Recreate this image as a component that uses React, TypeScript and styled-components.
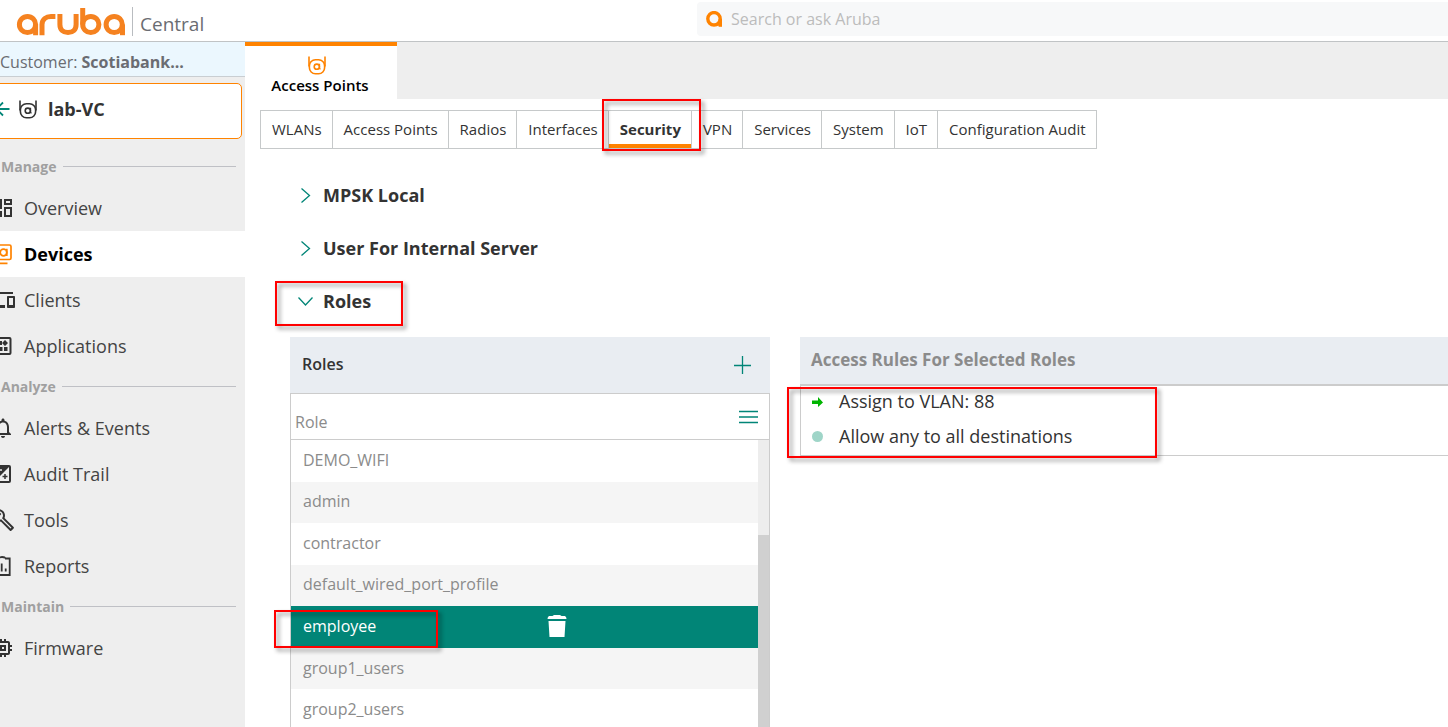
import React from "react";
import styled, { createGlobalStyle, css } from "styled-components";
import {
  MdOutlineDashboard,
  MdOutlineDevices,
  MdNotificationsNone,
  MdOutlineBuild,
  MdOutlineMemory,
} from "react-icons/md";

const orange = "#ff8300";
const teal = "#018577";
const line = "#c6c9ca";

const GlobalStyle = createGlobalStyle`
  * { box-sizing: border-box; }
  body {
    margin: 0;
    background: #fff;
    color: #333;
    font-family: "Open Sans", "Noto Sans", sans-serif;
    font-size: 16px;
  }
  button, input { font: inherit; color: inherit; }
  button { background: none; border: 0; padding: 0; cursor: pointer; }
  h2, ul { margin: 0; padding: 0; }
  ul { list-style: none; }
`;

const Page = styled.div`
  display: flex;
  flex-direction: column;
  height: 100vh;
  overflow: hidden;
`;

const Header = styled.header`
  display: flex;
  flex: none;
  height: 42px;
  border-bottom: 1px solid #c0c3c5;
`;

const Brand = styled.a`
  display: flex;
  flex: 1;
  align-items: center;
  gap: 6px;
  padding: 2px 0 0 16px;
  color: #6a6c72;
  font-size: 19px;
  text-decoration: none;
`;

const BrandName = styled.span`
  height: 29px;
  padding-left: 7px;
  border-left: 1px solid #b9bcc0;
  line-height: 34px;
`;

const Search = styled.label`
  display: flex;
  align-items: center;
  gap: 9px;
  width: calc(52% - 2px);
  height: 34px;
  margin: 2px 0;
  padding-left: 9px;
  border-radius: 4px 0 0 4px;
  background: #f7f8f9;
`;

const SearchInput = styled.input`
  flex: 1;
  padding: 0;
  border: 0;
  outline: 0;
  background: transparent;
  &::placeholder { color: #bcbcbc; opacity: 1; }
`;

const Body = styled.div`
  display: flex;
  flex: 1;
  min-height: 0;
`;

const Sidebar = styled.aside`
  flex: none;
  width: 245px;
  overflow: hidden;
  background: #eee;
`;

const Customer = styled.div`
  height: 35px;
  border-bottom: 1px solid #c9ced2;
  background: #ebf7fe;
  color: #6a6c72;
  line-height: 40px;
`;

const Context = styled.div`
  display: flex;
  align-items: center;
  height: 56px;
  margin: 6px 3px 10px -6px;
  padding-bottom: 4px;
  border: 1px solid ${orange};
  border-radius: 5px;
  background: #fff;
  font-size: 18px;
  font-weight: 700;
`;

const BackButton = styled.button`
  display: flex;
  margin-right: 8px;
`;

const ContextName = styled.span`
  margin-left: 11px;
`;

const SectionTitle = styled.h2`
  display: flex;
  align-items: center;
  gap: 6px;
  height: 36px;
  padding: 0 9px 1px 1px;
  color: #a0a0a0;
  font-size: 14px;
  font-weight: 700;
  &::after {
    content: "";
    flex: 1;
    height: 1px;
    background: #bfc0c5;
  }
`;

const NavLink = styled.a<{ $active?: boolean }>`
  display: flex;
  align-items: center;
  gap: 9px;
  height: 46px;
  margin-left: -9px;
  padding-bottom: 1px;
  background: ${(p) => (p.$active ? "#fff" : "transparent")};
  color: ${(p) => (p.$active ? "#000" : "#444")};
  font-size: 18px;
  font-weight: ${(p) => (p.$active ? 700 : 400)};
  text-decoration: none;
  svg { flex: none; color: ${(p) => (p.$active ? orange : "#333")}; }
`;

const Main = styled.main`
  flex: 1;
  min-width: 0;
`;

const DeviceBar = styled.div`
  display: flex;
  height: 57px;
  background: #eee;
`;

const DeviceTab = styled.button`
  display: flex;
  flex-direction: column;
  align-items: center;
  justify-content: flex-end;
  width: 152px;
  padding: 0 2px 4px 0;
  border-top: 4px solid ${orange};
  background: #fff;
  color: #000;
  font-size: 15px;
  font-weight: 600;
  line-height: 20px;
  svg { margin-right: 6px; }
`;

const Tabs = styled.nav`
  display: flex;
  width: max-content;
  margin: 11px 15px 20px;
  border: 1px solid ${line};
`;

const Tab = styled.button<{ $active?: boolean }>`
  position: relative;
  height: 37px;
  padding: 0 10px 1px 11px;
  font-size: 15px;
  & + & { border-left: 1px solid ${line}; }
  ${(p) =>
    p.$active &&
    css`
      font-weight: 700;
      box-shadow: inset 0 -4px ${orange};
    `}
`;

const Highlight = styled.span<{ $inset: string }>`
  position: absolute;
  inset: ${(p) => p.$inset};
  z-index: 1;
  border: 2px solid #f00;
  filter: drop-shadow(3px 3px 2px rgba(0, 0, 0, 0.45));
  pointer-events: none;
`;

const AccordionButton = styled.button`
  position: relative;
  display: flex;
  align-items: center;
  gap: 8px;
  height: 53px;
  margin-left: 52px;
  padding-bottom: 2px;
  font-size: 18px;
  font-weight: 700;
`;

const Panels = styled.div`
  display: flex;
  gap: 30px;
  margin: 9px 0 0 45px;
  align-items: flex-start;
`;

const RolesPanel = styled.section`
  flex: none;
  width: 480px;
`;

const PanelHeader = styled.header`
  display: flex;
  align-items: center;
  justify-content: space-between;
  height: 56px;
  padding: 0 18px 2px 12px;
  background: #e9edf2;
`;

const PanelTitle = styled.h2`
  font-size: 16px;
  font-weight: 600;
`;

const Grid = styled.div`
  border: 1px solid #ccc;
`;

const ColumnHeader = styled.div`
  display: flex;
  align-items: center;
  justify-content: space-between;
  height: 46px;
  padding: 0 11px 0 4px;
  border-bottom: 1px solid #ccc;
  color: #8b8b8b;
`;

const ColumnName = styled.span`
  padding-top: 10px;
`;

const GridBody = styled.div`
  display: flex;
`;

const RoleList = styled.ul`
  display: grid;
  flex: 1;
  grid-auto-rows: 1fr;
  height: 291px;
`;

const RoleRow = styled.li<{ $selected?: boolean }>`
  position: relative;
  display: grid;
  grid-template-columns: 244px 1fr;
  align-items: center;
  padding: 0 0 2px 12px;
  background: #fff;
  color: #8b8b8b;
  &:nth-child(even) { background: #f5f5f5; }
  ${(p) =>
    p.$selected &&
    css`
      && { background: ${teal}; color: #fff; }
    `}
`;

const RoleName = styled.button`
  justify-self: start;
`;

const IconButton = styled.button`
  display: flex;
  justify-self: start;
`;

const Scrollbar = styled.div`
  width: 11px;
  padding-top: 95px;
  background: #ededed;
`;

const ScrollThumb = styled.div`
  height: 100%;
  background: #d0d0d0;
`;

const RulesPanel = styled.section`
  position: relative;
  flex: 1;
`;

const RulesHeader = styled(PanelHeader)`
  height: 49px;
  padding: 0 11px 2px;
  border-bottom: 2px solid #ccc;
  color: #8b8b8b;
`;

const RulesTitle = styled(PanelTitle)`
  font-size: 17px;
  font-weight: 700;
`;

const Rules = styled.ul`
  height: 70px;
  border: 1px solid #ccc;
  border-width: 0 0 1px 1px;
`;

const Rule = styled.li`
  display: flex;
  align-items: center;
  gap: 15px;
  height: 35px;
  padding: 0 0 5px 11px;
  font-size: 18px;
`;

const Logo = () => (
  <svg width="110" height="30" viewBox="16 7 110 30" fill="none" stroke="#f58220" strokeWidth="5" role="img" aria-label="aruba">
    <circle cx="27.5" cy="24.5" r="8.1" />
    <path d="M35.6 24.500V35.200M42 35.200V24.600C42 19.400 46 16.400 51 16.400H55.400M59.900 14V24.600C59.900 29.800 63 32.600 68 32.600S76.100 29.800 76.100 24.600V14M82.700 8V24.600" />
    <circle cx="90.800" cy="24.500" r="8.100" />
    <circle cx="114.200" cy="24.500" r="8.100" />
    <path d="M122.500 24.500V35.200" />
  </svg>
);

const SearchMark = () => (
  <svg width="16" height="16" viewBox="0 0 16 16" fill="none" stroke={orange} strokeWidth="3.400" aria-hidden="true">
    <circle cx="8" cy="7.800" r="6.200" />
    <path d="M14.300 8V15.800" />
    <path d="M11 13H15" />
  </svg>
);

const ApIcon = ({ color }: { color: string }) => (
  <svg width="18" height="19" viewBox="0 0 18 19" fill="none" stroke={color} strokeWidth="1.600" aria-hidden="true">
    <path d="M1 0.500V10.500M17 0.500V10.500" />
    <rect x="1.400" y="3.700" width="15.200" height="14" rx="6" />
    <circle cx="8.800" cy="10.700" r="2.600" />
    <path d="M11.500 7.800V12.500L12.500 13.300" strokeWidth="1.300" />
  </svg>
);

const DevicesIcon = () => (
  <svg width="24" height="24" viewBox="0 0 24 24" fill="none" stroke="currentColor" strokeWidth="1.700" aria-hidden="true">
    <rect x="3.500" y="3" width="16.500" height="14.500" rx="1.500" />
    <circle cx="12.500" cy="10.500" r="3.300" />
    <path d="M15.800 6.800V14M6 21.300H16.500" />
  </svg>
);

const ApplicationsIcon = () => (
  <svg width="24" height="24" viewBox="0 0 24 24" fill="currentColor" aria-hidden="true">
    <rect x="3" y="4" width="16.500" height="16" rx="1" fill="none" stroke="currentColor" strokeWidth="2" />
    <path d="M7 7H11V11H7ZM7 13H11.500V17H7ZM13 13H16.500V17H13ZM14 6L17 9L14 12L11 9Z" />
  </svg>
);

const AuditIcon = () => (
  <svg width="24" height="24" viewBox="0 0 24 24" fill="currentColor" aria-hidden="true">
    <rect x="3" y="4" width="16" height="16" rx="1" fill="none" stroke="currentColor" strokeWidth="2" />
    <path d="M3 4H19L3 20Z" />
    <path d="M14 12V17M11.500 14.500H16.500" stroke="currentColor" strokeWidth="1.500" />
    <path d="M6 8H11" stroke="#eee" strokeWidth="1.500" />
  </svg>
);

const ReportsIcon = () => (
  <svg width="24" height="24" viewBox="0 0 24 24" fill="none" stroke="currentColor" strokeWidth="1.800" aria-hidden="true">
    <path d="M8 4.500H3V21H18.700V4.500H14M8 4.500C8 2.500 14 2.500 14 4.500M7 17.500V13M10.700 17.500V9.500M14.700 17.500V14.500" />
  </svg>
);

const BackArrow = () => (
  <svg width="16" height="16" viewBox="0 0 16 16" fill="none" stroke={teal} strokeWidth="1.800" aria-hidden="true">
    <path d="M1.500 8H14.500M8 1.500L1.500 8L8 14.500" />
  </svg>
);

const Chevron = ({ open }: { open?: boolean }) => (
  <svg width="18" height="18" viewBox="0 0 18 18" fill="none" stroke={teal} strokeWidth="1.300" aria-hidden="true">
    <path d={open ? "M1.500 5.500L8.500 13L15.500 5.500" : "M4.500 2.500L12.500 9.500L4.500 16.500"} />
  </svg>
);

const PlusIcon = () => (
  <svg width="18" height="20" viewBox="0 0 18 20" stroke={teal} strokeWidth="1.300" aria-hidden="true">
    <path d="M0 11.500H17M8.500 2V20" />
  </svg>
);

const MenuIcon = () => (
  <svg width="19" height="15" viewBox="0 0 19 15" stroke={teal} strokeWidth="1.300" aria-hidden="true">
    <path d="M0 2.500H19M0 8H19M0 13.500H19" />
  </svg>
);

const TrashIcon = () => (
  <svg width="20" height="24" viewBox="0 0 20 24" fill="#fff" aria-hidden="true">
    <path d="M5.500 2L7 1H13L14.500 2H18Q19.500 3 19.500 5H0.500Q0.500 3 2 2ZM1.500 7H18.500L17.500 23H2.500Z" />
  </svg>
);

const ArrowMark = () => (
  <svg width="12" height="12" viewBox="0 0 12 12" fill="#00b400" aria-hidden="true">
    <path d="M0 5.500H6V2L11 7.500L6 12V9H0Z" />
  </svg>
);

const DotMark = () => (
  <svg width="12" height="12" viewBox="0 0 12 12" fill="#9fd5c8" aria-hidden="true">
    <circle cx="5.500" cy="6.500" r="5.500" />
  </svg>
);

const sections = [
  {
    title: "Manage",
    items: [
      { label: "Overview", icon: <MdOutlineDashboard size={24} /> },
      { label: "Devices", icon: <DevicesIcon />, active: true },
      { label: "Clients", icon: <MdOutlineDevices size={24} /> },
      { label: "Applications", icon: <ApplicationsIcon /> },
    ],
  },
  {
    title: "Analyze",
    items: [
      { label: "Alerts & Events", icon: <MdNotificationsNone size={24} /> },
      { label: "Audit Trail", icon: <AuditIcon /> },
      { label: "Tools", icon: <MdOutlineBuild size={24} /> },
      { label: "Reports", icon: <ReportsIcon /> },
    ],
  },
  { title: "Maintain", items: [{ label: "Firmware", icon: <MdOutlineMemory size={24} /> }] },
];

const tabs = ["WLANs", "Access Points", "Radios", "Interfaces", "Security", "VPN", "Services", "System", "IoT", "Configuration Audit"];

const roles = ["DEMO_WIFI", "admin", "contractor", "default_wired_port_profile", "employee", "group1_users", "group2_users"];

export default function App() {
  return (
    <Page>
      <GlobalStyle />
      <Header>
        <Brand href="#">
          <Logo />
          <BrandName>Central</BrandName>
        </Brand>
        <Search>
          <SearchMark />
          <SearchInput type="search" placeholder="Search or ask Aruba" aria-label="Search or ask Aruba" />
        </Search>
      </Header>
      <Body>
        <Sidebar>
          <Customer>
            Customer: <b>Scotiabank...</b>
          </Customer>
          <Context>
            <BackButton aria-label="Back">
              <BackArrow />
            </BackButton>
            <ApIcon color="#333" />
            <ContextName>lab-VC</ContextName>
          </Context>
          {sections.map((section) => (
            <nav key={section.title} aria-label={section.title}>
              <SectionTitle>{section.title}</SectionTitle>
              {section.items.map((item) => (
                <NavLink key={item.label} href="#" $active={"active" in item}>
                  {item.icon}
                  {item.label}
                </NavLink>
              ))}
            </nav>
          ))}
        </Sidebar>
        <Main>
          <DeviceBar>
            <DeviceTab>
              <ApIcon color={orange} />
              Access Points
            </DeviceTab>
          </DeviceBar>
          <Tabs>
            {tabs.map((tab) => (
              <Tab key={tab} $active={tab === "Security"}>
                {tab}
                {tab === "Security" && <Highlight $inset="-12px -10px -3px -7px" />}
              </Tab>
            ))}
          </Tabs>
          <AccordionButton>
            <Chevron />
            MPSK Local
          </AccordionButton>
          <AccordionButton>
            <Chevron />
            User For Internal Server
          </AccordionButton>
          <AccordionButton aria-expanded="true">
            <Chevron open />
            Roles
            <Highlight $inset="6px -32px 2px -22px" />
          </AccordionButton>
          <Panels>
            <RolesPanel>
              <PanelHeader>
                <PanelTitle>Roles</PanelTitle>
                <IconButton aria-label="Add role">
                  <PlusIcon />
                </IconButton>
              </PanelHeader>
              <Grid>
                <ColumnHeader>
                  <ColumnName>Role</ColumnName>
                  <IconButton aria-label="Columns">
                    <MenuIcon />
                  </IconButton>
                </ColumnHeader>
                <GridBody>
                  <RoleList>
                    {roles.map((role) => {
                      const selected = role === "employee";
                      return (
                        <RoleRow key={role} $selected={selected}>
                          <RoleName>{role}</RoleName>
                          {selected && (
                            <>
                              <IconButton aria-label="Delete role">
                                <TrashIcon />
                              </IconButton>
                              <Highlight $inset="4px 320px 0 -17px" />
                            </>
                          )}
                        </RoleRow>
                      );
                    })}
                  </RoleList>
                  <Scrollbar>
                    <ScrollThumb />
                  </Scrollbar>
                </GridBody>
              </Grid>
            </RolesPanel>
            <RulesPanel>
              <RulesHeader>
                <RulesTitle>Access Rules For Selected Roles</RulesTitle>
              </RulesHeader>
              <Rules>
                <Rule>
                  <ArrowMark />
                  Assign to VLAN: 88
                </Rule>
                <Rule>
                  <DotMark />
                  Allow any to all destinations
                </Rule>
              </Rules>
              <Highlight $inset="50px 291px -2px -13px" />
            </RulesPanel>
          </Panels>
        </Main>
      </Body>
    </Page>
  );
}
